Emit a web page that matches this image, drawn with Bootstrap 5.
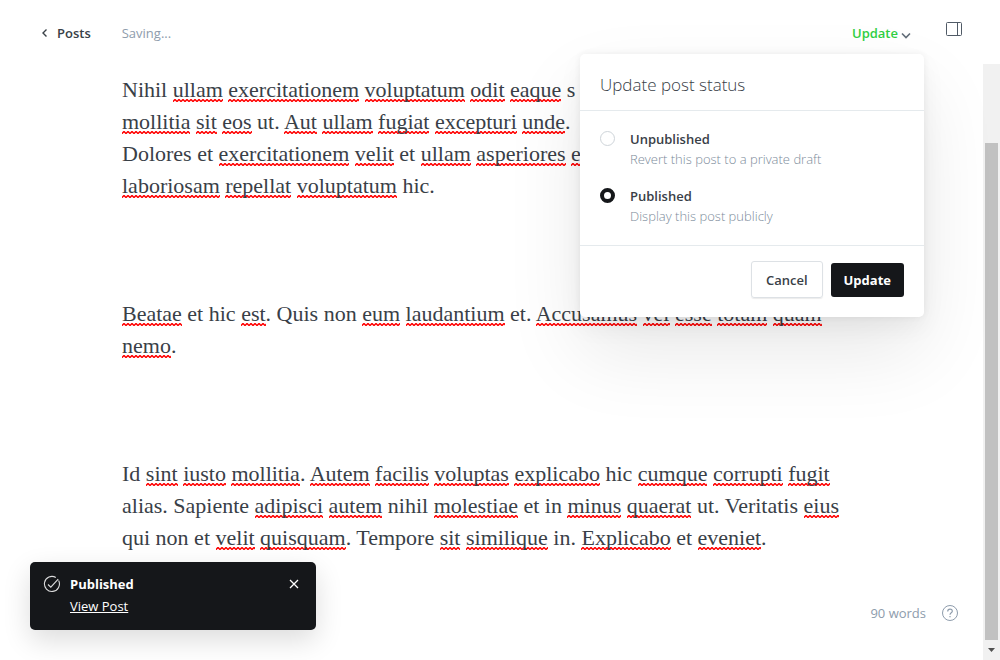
<!DOCTYPE html>
<html lang="en">
<head>
<meta charset="utf-8">
<meta name="viewport" content="width=device-width, initial-scale=1">
<title>Edit post</title>
<link href="https://cdn.jsdelivr.net/npm/bootstrap@5.3.0/dist/css/bootstrap.min.css" rel="stylesheet">
<style>
:root{--ink:#15171a;--slate:#394047;--mist:#8e9cac;--rule:#e5eaed}
body{font-family:"Open Sans","Noto Sans",sans-serif;font-size:13px;line-height:20px;color:var(--slate);overflow:hidden}
svg{display:block;fill:none;stroke:currentColor}
.topbar{height:64px;padding:2px 37px 0 40px}
.back-link{color:var(--slate);font-weight:600}
.saving{color:var(--mist);margin-left:31px}
.update-toggle{color:#30cf43;font-size:13px;font-weight:600;line-height:20px;gap:3px}
.update-toggle svg{color:#626d79;margin-top:4px}
.panel-toggle{color:#505a66;margin:0 0 8px 34px}
.editor{padding:10px 0 0 122px;font:22px/32px "Liberation Serif",serif;white-space:nowrap}
.editor p{margin-bottom:96px}
.editor u{text-decoration:none;background:url("data:image/svg+xml,%3Csvg xmlns='http://www.w3.org/2000/svg' width='4' height='3'%3E%3Cpath d='M-1 1.5L0 2.500L2 .5L4 2.500L5 1.500' fill='none' stroke='%23f00' stroke-width='1.500'/%3E%3C/svg%3E") repeat-x left bottom}
.scroll-track{width:17px;background:#f1f1f1;padding:79px 2px 0}
.scroll-thumb{background:#c1c1c1}
.scroll-end{height:20px;color:#505050}
.status-menu{top:54px;right:76px;width:344px;border-radius:5px;box-shadow:0 0 7px rgba(0,0,0,.06),0 36px 80px rgba(0,0,0,.09),0 10px 24px rgba(0,0,0,.05)}
.status-menu header{padding:19px 20px 14px;border-bottom:1px solid var(--rule)}
.status-menu h1{font-size:17px;line-height:23px;font-weight:300;margin:0}
.status-menu fieldset{padding:18px 20px 19px}
.choice{gap:15px}
.choice + .choice{margin-top:17px}
.choice input{appearance:none;flex:none;width:15px;height:15px;margin:2px 0 0;border:1px solid #ced4d9;border-radius:50%}
.choice input:checked{border:4px solid var(--ink)}
.choice strong{font-weight:600;display:block}
.choice small{display:block;font-size:13px;font-weight:300;color:#7c8b9a}
.status-menu footer{padding:15px 20px 19px;border-top:1px solid var(--rule);gap:8px}
.status-menu .btn{font-size:13px;line-height:20px;border-radius:3px}
.btn-cancel{padding:8px 14px 7px;font-weight:600;color:var(--slate);border:1px solid #dde1e5;box-shadow:0 1px 1px rgba(0,0,0,.08)}
.btn-publish{padding:7px 13px;font-weight:700;color:#fff;background:var(--ink);border:0}
.btn-publish:hover{color:#fff;background:#000}
.notice{left:30px;bottom:30px;width:286px;padding:11px 15px 13px 14px;background:var(--ink);border-radius:5px;box-shadow:0 10px 28px rgba(0,0,0,.14);color:#fff;line-height:22px}
.notice a{color:#fff}
.notice-tick{margin:2px 9px 0 -1px;opacity:.85}
.word-count{right:42px;bottom:37px;color:var(--mist);gap:16px}
</style>
</head>
<body class="bg-white">
<div class="vh-100 d-flex flex-column position-relative">
  <header class="topbar d-flex align-items-center">
    <a href="#" class="back-link d-flex align-items-center gap-2 text-decoration-none">
      <svg width="9" height="10" viewBox="0 0 9 10" stroke-width="1.4"><path d="M6.500 1.500L3 5l3.500 3.500"/></svg>Posts</a>
    <span class="saving">Saving...</span>
    <button type="button" class="update-toggle btn p-0 border-0 ms-auto d-flex align-items-center">Update
      <svg width="10" height="7" viewBox="0 0 10 7" stroke-width="1.6"><path d="M1 1.500l4 4 4-4"/></svg></button>
    <button type="button" class="panel-toggle btn p-0 border-0" aria-label="Settings">
      <svg width="18" height="16" viewBox="0 0 18 16"><rect x="1.500" y="1.500" width="15" height="13" rx="1"/><path d="M12.500 1.500v13"/></svg></button>
  </header>

  <div class="d-flex flex-grow-1 overflow-hidden">
    <main class="editor flex-grow-1 overflow-hidden">
      <p>Nihil <u>ullam</u> <u>exercitationem</u> <u>voluptatum</u> <u>odit</u> <u>eaque</u> s<br>
      <u>mollitia</u> <u>sit</u> <u>eos</u> ut. <u>Aut</u> <u>ullam</u> <u>fugiat</u> <u>excepturi</u> <u>unde</u>.<br>
      Dolores et <u>exercitationem</u> <u>velit</u> et <u>ullam</u> <u>asperiores</u> <u>eum</u><br>
      <u>laboriosam</u> <u>repellat</u> <u>voluptatum</u> hic.</p>
      <p><u>Beatae</u> et hic <u>est</u>. Quis non <u>eum</u> <u>laudantium</u> et. <u>Accusamus</u> <u>vel</u> <u>esse</u> <u>totam</u> <u>quam</u><br>
      <u>nemo</u>.</p>
      <p>Id <u>sint</u> <u>iusto</u> <u>mollitia</u>. <u>Autem</u> <u>facilis</u> <u>voluptas</u> <u>explicabo</u> hic <u>cumque</u> <u>corrupti</u> <u>fugit</u><br>
      alias. Sapiente <u>adipisci</u> <u>autem</u> nihil <u>molestiae</u> et in <u>minus</u> <u>quaerat</u> ut. Veritatis <u>eius</u><br>
      qui non et <u>velit</u> <u>quisquam</u>. Tempore <u>sit</u> <u>similique</u> in. <u>Explicabo</u> et <u>eveniet</u>.</p>
    </main>
    <div class="scroll-track d-flex flex-column flex-shrink-0" aria-hidden="true">
      <div class="scroll-thumb flex-grow-1"></div>
      <div class="scroll-end d-flex align-items-center justify-content-center"><svg width="7" height="4" viewBox="0 0 7 4"><path d="M0 0h7L3.500 4z" fill="currentColor" stroke="none"/></svg></div>
    </div>
  </div>

  <form class="status-menu position-absolute bg-white">
    <header><h1>Update post status</h1></header>
    <fieldset>
      <label class="choice d-flex"><input type="radio" name="status"><span><strong>Unpublished</strong><small>Revert this post to a private draft</small></span></label>
      <label class="choice d-flex"><input type="radio" name="status" checked><span><strong>Published</strong><small>Display this post publicly</small></span></label>
    </fieldset>
    <footer class="d-flex justify-content-end align-items-center">
      <button type="button" class="btn btn-cancel">Cancel</button>
      <button type="button" class="btn btn-publish">Update</button>
    </footer>
  </form>

  <div class="notice position-absolute d-flex" role="status">
    <svg class="notice-tick" width="18" height="18" viewBox="0 0 18 18" stroke-width="1.100"><path d="M15.600 5.500A7.500 7.500 0 1 1 12.800 2.500"/><path d="M5 9.500l2.800 2.700 7.400-8"/></svg>
    <div class="flex-grow-1"><strong>Published</strong><br><a href="#">View Post</a></div>
    <button type="button" class="btn p-0 border-0 text-white align-self-start" aria-label="Close"><svg width="14" height="22" viewBox="0 0 14 22" stroke-width="1.300"><path d="M3 7l8 8M11 7l-8 8"/></svg></button>
  </div>

  <div class="word-count position-absolute d-flex align-items-center">
    <span>90 words</span>
    <svg width="16" height="16" viewBox="0 0 16 16"><circle cx="8" cy="8" r="7.500"/><path d="M5.700 6.500C5.700 3.300 10.300 3.300 10.300 6.200 10.300 7.800 8 7.700 8 9.700M8 11v1.200" stroke-width="1.200"/></svg>
  </div>
</div>
<script src="https://cdn.jsdelivr.net/npm/bootstrap@5.3.0/dist/js/bootstrap.bundle.min.js"></script>
</body>
</html>
